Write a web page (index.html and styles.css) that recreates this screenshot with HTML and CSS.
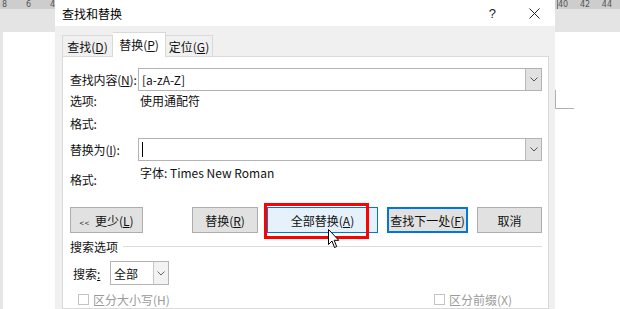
FILE: index.html
```html
<!DOCTYPE html>
<html lang="zh-CN">
<head>
    <meta charset="UTF-8">
    <meta name="viewport" content="width=device-width, initial-scale=1.0">
    <title>查找和替换</title>
    <link rel="stylesheet" href="styles.css">
</head>
<body>
    <div class="screen">
        <!-- document behind the dialog, left side -->
        <div class="doc doc-left">
            <div class="ruler"><span>8</span><span>6</span><span>4</span></div>
            <div class="ruler-gap"></div>
            <div class="page-row">
                <div class="page"></div>
            </div>
        </div>

        <div class="dialog">
            <div class="titlebar">
                <span class="title">查找和替换</span>
                <span class="help">?</span>
                <svg class="close" width="11" height="11" viewBox="0 0 11 11">
                    <path d="M0.5 0.5 L10.5 10.5 M10.5 0.5 L0.5 10.5" stroke="#222" stroke-width="1" fill="none"/>
                </svg>
            </div>

            <div class="tabs">
                <div class="tab tab-find">查找(<u>D</u>)</div>
                <div class="tab tab-replace active">替换(<u>P</u>)</div>
                <div class="tab tab-goto">定位(<u>G</u>)</div>
            </div>

            <div class="panel">
                <div class="field-row find-row">
                    <label class="label">查找内容(<u>N</u>):</label>
                    <div class="combo">
                        <span class="combo-text">[a-zA-Z]</span>
                        <span class="combo-btn">
                            <svg width="8" height="5" viewBox="0 0 8 5"><path d="M0.5 0.5 L4 4 L7.5 0.5" stroke="#555" fill="none"/></svg>
                        </span>
                    </div>
                </div>

                <div class="field-row info-row">
                    <span class="label">选项:</span>
                    <span class="value">使用通配符</span>
                </div>

                <div class="field-row format-row">
                    <span class="label">格式:</span>
                    <span class="value"></span>
                </div>

                <div class="field-row replace-row">
                    <label class="label">替换为(<u>I</u>):</label>
                    <div class="combo">
                        <span class="caret"></span>
                        <span class="combo-btn">
                            <svg width="8" height="5" viewBox="0 0 8 5"><path d="M0.5 0.5 L4 4 L7.5 0.5" stroke="#555" fill="none"/></svg>
                        </span>
                    </div>
                </div>

                <div class="field-row font-row">
                    <span class="label">格式:</span>
                    <span class="value">字体: Times New Roman</span>
                </div>

                <div class="button-row">
                    <button class="btn btn-less"><span class="arrows">&lt;&lt;</span> 更少(<u>L</u>)</button>
                    <div class="button-group">
                        <button class="btn btn-replace">替换(<u>R</u>)</button>
                        <div class="highlight-wrap">
                            <button class="btn btn-all">全部替换(<u>A</u>)</button>
                            <div class="annotation"></div>
                            <svg class="pointer" width="12" height="20" viewBox="0 0 12 20">
                                <path d="M0.5 0.5 L0.5 15.5 L4 12 L6.5 18.5 L8.7 17.6 L6.2 11.3 L10.8 11.3 Z" fill="#fff" stroke="#000" stroke-width="1" stroke-linejoin="round"/>
                            </svg>
                        </div>
                        <button class="btn btn-next">查找下一处(<u>F</u>)</button>
                        <button class="btn btn-cancel">取消</button>
                    </div>
                </div>

                <div class="group-title">
                    <span>搜索选项</span>
                    <span class="group-line"></span>
                </div>

                <div class="search-row">
                    <span class="search-label">搜索<u>:</u></span>
                    <div class="select">
                        <span class="select-text">全部</span>
                        <span class="select-btn">
                            <svg width="8" height="5" viewBox="0 0 8 5"><path d="M0.5 0.5 L4 4 L7.5 0.5" stroke="#666" fill="none"/></svg>
                        </span>
                    </div>
                </div>

                <div class="check-row">
                    <div class="check check-case"><span class="box"></span>区分大小写(H)</div>
                    <div class="check"><span class="box"></span>区分前缀(X)</div>
                </div>
            </div>
        </div>

        <!-- document behind the dialog, right side -->
        <div class="doc doc-right">
            <div class="ruler"><span class="first">40</span><span>42</span><span>44</span></div>
            <div class="ruler-gap"></div>
            <div class="page-row">
                <div class="page">
                    <div class="margin-mark"></div>
                </div>
            </div>
        </div>
    </div>
</body>
</html>
```

FILE: styles.css
```css
body {
    margin: 0;
    padding: 0;
    font-family: "Noto Sans CJK SC", "Noto Sans", sans-serif;
    font-size: 12px;
    color: #111;
    overflow: hidden;
}
u {
    text-decoration: underline;
    text-underline-offset: 1px;
}
.screen {
    display: flex;
    width: 620px;
    height: 309px;
    overflow: hidden;
}

/* word document around */
.doc {
    display: flex;
    flex-direction: column;
    background-color: #e6e6e6;
}
.doc-left {
    width: 55px;
}
.doc-right {
    width: 65px;
}
.ruler {
    height: 9px;
    background-color: #cdcdcd;
    display: flex;
    justify-content: space-between;
    align-items: center;
    font-family: "DejaVu Sans", sans-serif;
    font-size: 8px;
    line-height: 9px;
    color: #555;
    padding: 0 0 0 2px;
    overflow: hidden;
}
.doc-right .ruler {
    padding: 0 8px 0 2px;
}
.ruler .first {
    border-left: 1px solid #777;
}
.ruler-gap {
    height: 23px;
    background-color: #e4e4e4;
}
.page-row {
    flex: 1;
    display: flex;
}
.page {
    flex: 1;
    background-color: #fff;
}
.doc-left .page {
    margin-left: 3px;
}
.margin-mark {
    width: 19px;
    height: 19px;
    margin-top: 58px;
    border-left: 1px solid #b0b0b0;
    border-bottom: 1px solid #b0b0b0;
    box-sizing: border-box;
}

/* dialog */
.dialog {
    width: 500px;
    display: flex;
    flex-direction: column;
    background-color: #f0f0f0;
}
.titlebar {
    height: 27px;
    background-color: #fff;
    display: flex;
    align-items: center;
    padding-left: 7px;
}
.title {
    font-size: 12px;
    color: #000;
}
.help {
    margin-left: auto;
    font-family: "Liberation Sans", sans-serif;
    font-size: 13px;
    color: #222;
}
.close {
    margin-left: 33px;
    margin-right: 15px;
}

.tabs {
    display: flex;
    align-items: flex-end;
    padding: 6px 7px 0;
}
.tab {
    box-sizing: border-box;
    height: 21px;
    border: 1px solid #d9d9d9;
    border-bottom: none;
    background-color: #f0f0f0;
    text-align: center;
    line-height: 21px;
}
.tab-find {
    width: 51px;
}
.tab-replace {
    width: 53px;
}
.tab-goto {
    width: 47px;
    border-left: none;
}
.tab.active {
    position: relative;
    height: 25px;
    margin-bottom: -1px;
    background-color: #fff;
    line-height: 24px;
    border-left: none;
}

.panel {
    flex: 1;
    margin: 0 6px 0 7px;
    background-color: #fff;
    border: 1px solid #d9d9d9;
    padding: 0 6px 0 7px;
}
.field-row {
    display: grid;
    grid-template-columns: 68px 1fr;
    align-items: center;
}
.label {
    white-space: nowrap;
    letter-spacing: -0.2px;
}
.find-row {
    margin-top: 11px;
    height: 23px;
}
.info-row {
    height: 18px;
}
.format-row {
    margin-top: 5px;
    height: 18px;
}
.replace-row {
    margin-top: 6px;
    height: 23px;
}
.font-row {
    height: 30px;
    align-items: start;
}
.font-row .label {
    margin-top: 10px;
    line-height: 18px;
}
.font-row .value {
    margin-top: 3px;
    line-height: 18px;
}
.value {
    padding-left: 2px;
}
.combo {
    box-sizing: border-box;
    height: 23px;
    border: 1px solid #b3b3b3;
    display: flex;
    align-items: center;
}
.combo-text {
    padding-left: 3px;
    flex: 1;
}
.caret {
    width: 1px;
    height: 15px;
    background-color: #000;
    margin-left: 3px;
}
.combo-btn {
    margin-left: auto;
    box-sizing: border-box;
    width: 16px;
    height: 21px;
    background-color: #e1e1e1;
    border-left: 1px solid #b8b8b8;
    display: flex;
    align-items: center;
    justify-content: center;
}

/* buttons */
.button-row {
    display: flex;
    margin-top: 16px;
    height: 26px;
}
.button-group {
    margin-left: auto;
    display: flex;
    gap: 9px;
}
.btn {
    box-sizing: border-box;
    height: 26px;
    padding: 0;
    font-family: inherit;
    font-size: 12px;
    color: #111;
    background-color: #e1e1e1;
    border: 1px solid #adadad;
}
.btn-less {
    width: 73px;
}
.arrows {
    font-size: 8px;
    letter-spacing: 1px;
    margin-right: 2px;
}
.btn-replace {
    width: 66px;
}
.btn-all {
    width: 111px;
    background-color: #e5f1fb;
    border-color: #0078d7;
}
.btn-next {
    width: 81px;
    border: 2px solid #0078d7;
}
.btn-cancel {
    width: 65px;
}
.highlight-wrap {
    position: relative;
}
.annotation {
    position: absolute;
    left: -3px;
    top: -4px;
    width: 105px;
    height: 36px;
    box-sizing: border-box;
    border: 3px solid #ff0000;
}
.pointer {
    position: absolute;
    left: 61px;
    top: 22px;
}

/* search options */
.group-title {
    display: flex;
    align-items: center;
    margin-top: 4px;
    height: 18px;
}
.group-line {
    flex: 1;
    height: 1px;
    margin-left: 5px;
    background-color: #dcdcdc;
}
.search-row {
    display: flex;
    align-items: center;
    margin-top: 6px;
    height: 24px;
    padding-left: 3px;
}
.search-label {
    width: 37px;
}
.select {
    box-sizing: border-box;
    width: 59px;
    height: 24px;
    border: 1px solid #b3b3b3;
    display: flex;
    align-items: center;
}
.select-text {
    padding-left: 3px;
    flex: 1;
}
.select-btn {
    box-sizing: border-box;
    width: 15px;
    height: 22px;
    border-left: 1px solid #c8c8c8;
    background-color: #f2f2f2;
    display: flex;
    align-items: center;
    justify-content: center;
}
.check-row {
    display: flex;
    align-items: center;
    margin-top: 5px;
    height: 18px;
}
.check {
    display: flex;
    align-items: center;
    color: #9a9a9a;
}
.check-case {
    width: 356px;
    padding-left: 8px;
}
.box {
    box-sizing: border-box;
    width: 11px;
    height: 11px;
    border: 1px solid #c4c4c4;
    background-color: #fff;
    margin-right: 4px;
}
```
